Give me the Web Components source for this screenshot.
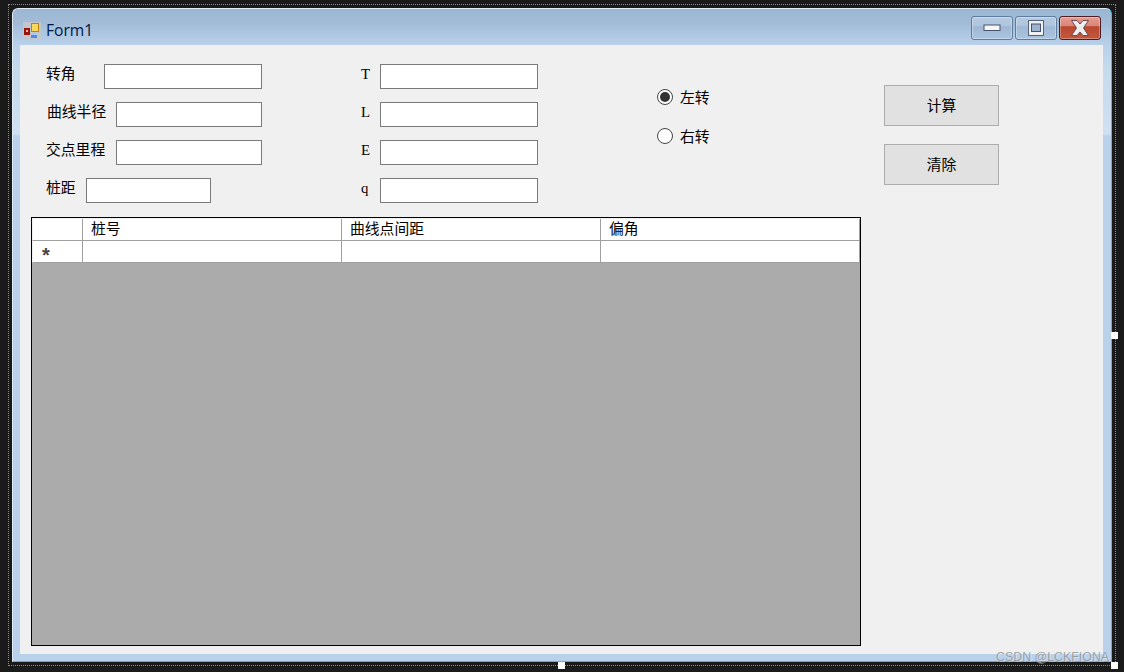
<!DOCTYPE html>
<html>
<head>
<meta charset="utf-8">
<title>Form1</title>
<style>
  html, body { margin: 0; background: #1a1a1a; }
  body { font: 14.8px "Liberation Serif", "Noto Sans CJK SC", serif; color: #000; }
</style>
</head>
<body>
<design-surface>
  <form-window caption="Form1">
    <form-top>
      <field-column slot="first">
        <form-field label="转角" label-width="58" input-width="158"></form-field>
        <form-field label="曲线半径" label-width="70" input-width="146" label-shift="1"></form-field>
        <form-field label="交点里程" label-width="70" input-width="146"></form-field>
        <form-field label="桩距" label-width="40" input-width="125"></form-field>
      </field-column>
      <field-column slot="second">
        <form-field label="T" label-width="19" input-width="158"></form-field>
        <form-field label="L" label-width="19" input-width="158"></form-field>
        <form-field label="E" label-width="19" input-width="158"></form-field>
        <form-field label="q" label-width="19" input-width="158"></form-field>
      </field-column>
      <radio-option slot="radios" label="左转" checked></radio-option>
      <radio-option slot="radios" label="右转"></radio-option>
      <push-button slot="buttons">计算</push-button>
      <push-button slot="buttons">清除</push-button>
    </form-top>
    <data-grid columns="桩号,曲线点间距,偏角"></data-grid>
  </form-window>
</design-surface>

<template id="surface-tpl">
  <style>
    :host { display: block; position: relative; width: 1124px; height: 672px; box-sizing: border-box; padding: 4px 8px 6px; background: #1a1a1a; overflow: hidden; }
    .frame { box-sizing: border-box; height: 100%; padding: 3px; border: 1px dotted #8a8a8a; }
    .handle { position: absolute; width: 7px; height: 7px; background: #fff; }
    .mark { position: absolute; left: 996px; top: 650px; font: 12.4px "Liberation Sans", sans-serif; color: rgba(150,150,150,.85); text-shadow: 1px 1px 0 rgba(255,255,255,.35); white-space: nowrap; }
  </style>
  <div class="frame"><slot></slot></div>
  <i class="handle" style="left:1111px;top:332px"></i>
  <i class="handle" style="left:558px;top:662px"></i>
  <i class="handle" style="left:1111px;top:662px"></i>
  <span class="mark">CSDN @LCKFIONA</span>
</template>

<template id="window-tpl">
  <style>
    :host { display: flex; flex-direction: column; height: 100%; box-sizing: border-box; padding: 0 8px 7px 7px; border: 1px solid #dfeaf5; border-right-color: #2fc4ee; border-bottom-color: #2fc4ee; border-radius: 6px 6px 0 0;
      background: linear-gradient(180deg, #9cb7d3 0, #a2bcd8 14px, #b9d1ea 36px, #c6daee 60px, #cfe0f2 125px, #b9d1ea 127px, #b9d1ea 100%); }
    .title { flex: none; display: flex; align-items: center; height: 36px; }
    .title svg.logo { margin: 8px 0 0 3px; }
    .caption { margin: 5px 0 0 5px; font: 15.6px "Open Sans", "Liberation Sans", sans-serif; color: #001848; }
    .controls { margin: 2px 2px 0 auto; display: flex; gap: 2px; }
    .ctl { width: 42px; height: 24px; box-sizing: border-box; display: flex; align-items: center; justify-content: center; border: 1px solid #5f7c9e; border-radius: 3px; box-shadow: inset 0 0 0 1px rgba(255,255,255,.3); background: linear-gradient(180deg, #b6cbe1 0, #afc5dd 40%, #9fb8d3 44%, #abc4df 100%); }
    .ctl.close { border-color: #4d1c26; background: linear-gradient(180deg, #e69c8e 0, #d8877a 40%, #b9482e 44%, #c2573e 100%); }
    .client { flex: 1; box-sizing: border-box; padding: 19px 0 0 11px; background: #f0f0f0; }
  </style>
  <div class="title">
    <svg class="logo" width="18" height="18" viewBox="0 0 18 18">
      <rect width="18" height="18" fill="#c2c7ce"/>
      <rect x="1" y="6" width="6" height="7" fill="#9c130c"/>
      <rect x="3" y="8" width="2" height="2" fill="#f2b8a0"/>
      <rect x="8.5" y="1.5" width="7" height="8" fill="#f9d65c" stroke="#b98508"/>
      <rect x="8" y="11" width="6" height="5" fill="#4f8ae4"/>
      <rect x="8" y="11" width="6" height="2" fill="#a9c8f2"/>
    </svg>
    <span class="caption"></span>
    <div class="controls">
      <div class="ctl">
        <svg width="18" height="8" viewBox="0 0 18 8"><rect x="1" y="1" width="16" height="5.5" fill="#f6f6f6" stroke="#43536b"/></svg>
      </div>
      <div class="ctl">
        <svg width="18" height="16" viewBox="0 0 18 16"><rect x="1.5" y="0.5" width="15" height="15" fill="#f0f0f0" stroke="#55647a"/><rect x="4.5" y="4" width="9" height="7.5" fill="#9db4cf" stroke="#43536b"/></svg>
      </div>
      <div class="ctl close">
        <svg width="20" height="18" viewBox="0 0 20 18"><path d="M1.5 1.5H7L10 5L13 1.5H18.5L13.5 9L18.5 16.5H13L10 13L7 16.5H1.5L6.5 9Z" fill="#ededed" stroke="#6a4a54"/></svg>
      </div>
    </div>
  </div>
  <div class="client"><slot></slot></div>
</template>

<template id="top-tpl">
  <style>
    :host { display: flex; margin: 0 0 14px 15px; }
    .first { width: 315px; }
    .second { width: 296px; }
    .radios { width: 227px; padding-top: 25px; box-sizing: border-box; display: flex; flex-direction: column; gap: 23px; }
    .buttons { padding-top: 21px; display: flex; flex-direction: column; gap: 18px; }
  </style>
  <div class="first"><slot name="first"></slot></div>
  <div class="second"><slot name="second"></slot></div>
  <div class="radios"><slot name="radios"></slot></div>
  <div class="buttons"><slot name="buttons"></slot></div>
</template>

<template id="column-tpl">
  <style>:host { display: flex; flex-direction: column; gap: 13px; }</style>
  <slot></slot>
</template>

<template id="field-tpl">
  <style>
    :host { display: flex; align-items: center; height: 25px; line-height: 16px; }
    label { flex: none; margin-top: -5px; white-space: nowrap; }
    .box { flex: none; height: 25px; box-sizing: border-box; border: 1px solid #7a7a7a; background: #fff; }
  </style>
  <label></label>
  <div class="box"></div>
</template>

<template id="radio-tpl">
  <style>
    :host { display: flex; align-items: center; gap: 7px; height: 16px; line-height: 16px; }
    svg { flex: none; }
    span { margin-top: 1px; }
  </style>
  <svg width="16" height="16" viewBox="0 0 16 16">
    <circle cx="8" cy="8" r="7.5" fill="#fff" stroke="#444"/>
    <circle class="dot" cx="8" cy="8" r="5" fill="#333"/>
  </svg>
  <span></span>
</template>

<template id="button-tpl">
  <style>
    :host { display: flex; align-items: center; justify-content: center; width: 115px; height: 41px; box-sizing: border-box; padding-bottom: 3px; border: 1px solid #adadad; background: #e1e1e1; }
  </style>
  <slot></slot>
</template>

<template id="grid-tpl">
  <style>
    :host { display: block; box-sizing: border-box; width: 830px; height: 429px; border: 1px solid #000; background: #ababab; }
    .row { display: grid; grid-template-columns: 50px 259px 259px 259px; height: 22px; background: #fff; box-sizing: border-box; border-bottom: 1px solid #a0a0a0; border-left: 1px solid #f0f0f0; }
    .row.head { height: 23px; border-top: 1px solid #f0f0f0; }
    .cell { box-sizing: border-box; border-right: 1px solid #a0a0a0; padding-left: 8px; line-height: 21px; white-space: nowrap; }
    .star { padding: 8px 0 0 9px; font: bold 20px/13px "Liberation Sans", sans-serif; color: #444; }
  </style>
  <div class="row head"></div>
  <div class="row">
    <div class="cell star">*</div><div class="cell"></div><div class="cell"></div><div class="cell"></div>
  </div>
</template>

<script>
  // shadow root from a template id
  const mount = (el, id) => {
    const root = el.attachShadow({ mode: "open" });
    root.appendChild(document.getElementById(id).content.cloneNode(true));
    return root;
  };

  class DesignSurface extends HTMLElement {
    constructor() { super(); mount(this, "surface-tpl"); }
  }

  class FormWindow extends HTMLElement {
    constructor() { super(); mount(this, "window-tpl"); }
    connectedCallback() {
      this.shadowRoot.querySelector(".caption").textContent = this.getAttribute("caption");
    }
  }

  class FormTop extends HTMLElement {
    constructor() { super(); mount(this, "top-tpl"); }
  }

  class FieldColumn extends HTMLElement {
    constructor() { super(); mount(this, "column-tpl"); }
  }

  class FormField extends HTMLElement {
    constructor() { super(); mount(this, "field-tpl"); }
    connectedCallback() {
      const label = this.shadowRoot.querySelector("label");
      const shift = Number(this.getAttribute("label-shift") || 0);
      label.textContent = this.getAttribute("label");
      label.style.width = (this.getAttribute("label-width") - shift) + "px";
      label.style.marginLeft = shift + "px";
      this.shadowRoot.querySelector(".box").style.width = this.getAttribute("input-width") + "px";
    }
  }

  class RadioOption extends HTMLElement {
    constructor() { super(); mount(this, "radio-tpl"); }
    connectedCallback() {
      this.shadowRoot.querySelector("span").textContent = this.getAttribute("label");
      if (!this.hasAttribute("checked")) this.shadowRoot.querySelector(".dot").remove();
    }
  }

  class PushButton extends HTMLElement {
    constructor() { super(); mount(this, "button-tpl"); }
  }

  class DataGrid extends HTMLElement {
    constructor() { super(); mount(this, "grid-tpl"); }
    connectedCallback() {
      const head = this.shadowRoot.querySelector(".head");
      ["", ...this.getAttribute("columns").split(",")].forEach(name => {
        const cell = document.createElement("div");
        cell.className = "cell";
        cell.textContent = name;
        head.appendChild(cell);
      });
    }
  }

  customElements.define("design-surface", DesignSurface);
  customElements.define("form-window", FormWindow);
  customElements.define("form-top", FormTop);
  customElements.define("field-column", FieldColumn);
  customElements.define("form-field", FormField);
  customElements.define("radio-option", RadioOption);
  customElements.define("push-button", PushButton);
  customElements.define("data-grid", DataGrid);
</script>
</body>
</html>
